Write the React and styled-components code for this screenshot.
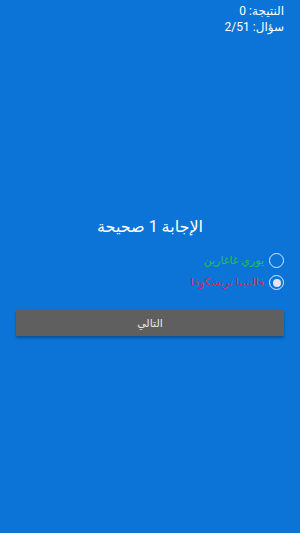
import React from "react";
import styled, { createGlobalStyle } from "styled-components";

const Global = createGlobalStyle`
  html, body { margin: 0; padding: 0; }
  body { background: #0b74d6; font-family: Roboto, "DejaVu Sans", sans-serif; }
`;

const Screen = styled.div`
  width: 300px;
  height: 533px;
  background: #0b74d6;
  direction: rtl;
  display: flex;
  flex-direction: column;
  box-sizing: border-box;
  padding: 3px 16px 0 16px;
  color: #fff;
`;

const Header = styled.div`
  display: flex;
  flex-direction: column;
  align-items: flex-start;
  font-size: 12px;
  line-height: 16px;
`;

const Question = styled.div`
  margin-top: 181px;
  font-size: 16px;
  line-height: 22px;
  text-align: center;
`;

const Options = styled.div`
  margin-top: 14px;
  display: flex;
  flex-direction: column;
  align-items: flex-start;
  gap: 5px;
`;

const Option = styled.label`
  display: flex;
  align-items: center;
  gap: 5px;
  font-size: 11px;
  color: ${(p) => p.$color};
  height: 17px;
`;

const Radio = styled.span`
  width: 13px;
  height: 13px;
  border: 1.7px solid #e6e6ee;
  border-radius: 50%;
  display: flex;
  align-items: center;
  justify-content: center;
  flex: none;
  &::after {
    content: "";
    width: 8px;
    height: 8px;
    border-radius: 50%;
    background: ${(p) => (p.$checked ? "#e6e6ee" : "transparent")};
  }
`;

const NextButton = styled.button`
  margin-top: 19px;
  height: 26px;
  background: #5f5f5f;
  border: none;
  border-radius: 1px;
  color: #e8e8e8;
  font-family: Roboto, "DejaVu Sans", sans-serif;
  font-size: 11px;
  box-shadow: 0 2px 3px rgba(0, 0, 0, 0.3);
`;

export default function App() {
  return (
    <>
      <Global />
      <Screen>
        <Header>
          <div>النتيجة: 0</div>
          <div>سؤال: 2/51</div>
        </Header>
        <Question>الإجابة 1 صحيحة</Question>
        <Options>
          <Option $color="#22c24a">
            <Radio />
            <span>يوري غاغارين</span>
          </Option>
          <Option $color="#e0254a">
            <Radio $checked />
            <span>فالنتينا تريشكوفا</span>
          </Option>
        </Options>
        <NextButton>التالي</NextButton>
      </Screen>
    </>
  );
}
